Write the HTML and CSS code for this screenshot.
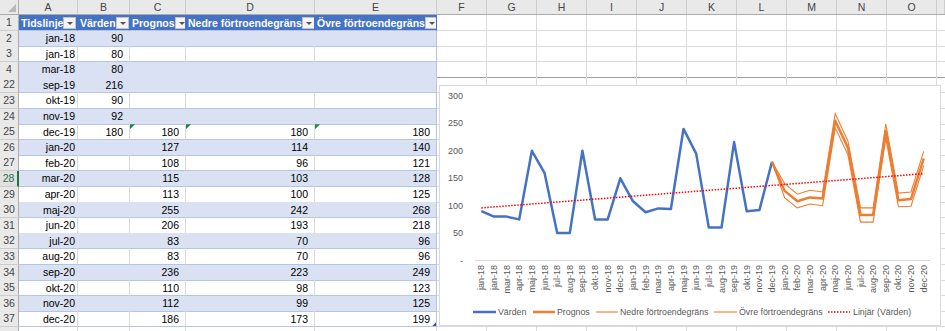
FILE: index.html
```html
<!DOCTYPE html>
<html lang="sv">
<head>
    <meta charset="UTF-8">
    <title>Prognos</title>
    <link rel="stylesheet" href="styles.css">
</head>
<body>
<div class="sheet">
    <div class="colhead">
        <div class="corner"></div>
        <div class="ch">A</div><div class="ch">B</div><div class="ch">C</div><div class="ch">D</div><div class="ch">E</div>
        <div class="ch">F</div><div class="ch">G</div><div class="ch">H</div><div class="ch">I</div><div class="ch">J</div>
        <div class="ch">K</div><div class="ch">L</div><div class="ch">M</div><div class="ch">N</div><div class="ch">O</div>
        <div class="ch"></div>
    </div>

    <div class="row hdr">
        <div class="rn">1</div>
        <div class="c">Tidslinje<span class="filter"></span></div>
        <div class="c">Värden<span class="filter"></span></div>
        <div class="c">Prognos<span class="filter"></span></div>
        <div class="c">Nedre förtroendegräns<span class="filter"></span></div>
        <div class="c e">Övre förtroendegräns<span class="filter"></span></div>
        <div class="rest"></div>
    </div>
    <div class="row band">
        <div class="rn">2</div><div class="c a">jan-18</div><div class="c">90</div><div class="c"></div><div class="c"></div><div class="c e"></div><div class="rest"></div>
    </div>
    <div class="row">
        <div class="rn">3</div><div class="c a">jan-18</div><div class="c">80</div><div class="c"></div><div class="c"></div><div class="c e"></div><div class="rest"></div>
    </div>
    <div class="row band before-hidden">
        <div class="rn">4</div><div class="c a">mar-18</div><div class="c">80</div><div class="c"></div><div class="c"></div><div class="c e"></div><div class="rest"></div>
    </div>
    <div class="row band">
        <div class="rn">22</div><div class="c a">sep-19</div><div class="c">216</div><div class="c"></div><div class="c"></div><div class="c e"></div><div class="rest"></div>
    </div>
    <div class="row">
        <div class="rn">23</div><div class="c a">okt-19</div><div class="c">90</div><div class="c"></div><div class="c"></div><div class="c e"></div><div class="rest"></div>
    </div>
    <div class="row band">
        <div class="rn">24</div><div class="c a">nov-19</div><div class="c">92</div><div class="c"></div><div class="c"></div><div class="c e"></div><div class="rest"></div>
    </div>
    <div class="row">
        <div class="rn">25</div><div class="c a">dec-19</div><div class="c">180</div><div class="c err">180</div><div class="c err">180</div><div class="c e err">180</div><div class="rest"></div>
    </div>
    <div class="row band">
        <div class="rn">26</div><div class="c a">jan-20</div><div class="c"></div><div class="c">127</div><div class="c">114</div><div class="c e">140</div><div class="rest"></div>
    </div>
    <div class="row">
        <div class="rn">27</div><div class="c a">feb-20</div><div class="c"></div><div class="c">108</div><div class="c">96</div><div class="c e">121</div><div class="rest"></div>
    </div>
    <div class="row band">
        <div class="rn sel">28</div><div class="c a">mar-20</div><div class="c"></div><div class="c">115</div><div class="c">103</div><div class="c e">128</div><div class="rest"></div>
    </div>
    <div class="row">
        <div class="rn">29</div><div class="c a">apr-20</div><div class="c"></div><div class="c">113</div><div class="c">100</div><div class="c e">125</div><div class="rest"></div>
    </div>
    <div class="row band">
        <div class="rn">30</div><div class="c a">maj-20</div><div class="c"></div><div class="c">255</div><div class="c">242</div><div class="c e">268</div><div class="rest"></div>
    </div>
    <div class="row">
        <div class="rn">31</div><div class="c a">jun-20</div><div class="c"></div><div class="c">206</div><div class="c">193</div><div class="c e">218</div><div class="rest"></div>
    </div>
    <div class="row band">
        <div class="rn">32</div><div class="c a">jul-20</div><div class="c"></div><div class="c">83</div><div class="c">70</div><div class="c e">96</div><div class="rest"></div>
    </div>
    <div class="row">
        <div class="rn">33</div><div class="c a">aug-20</div><div class="c"></div><div class="c">83</div><div class="c">70</div><div class="c e">96</div><div class="rest"></div>
    </div>
    <div class="row band">
        <div class="rn">34</div><div class="c a">sep-20</div><div class="c"></div><div class="c">236</div><div class="c">223</div><div class="c e">249</div><div class="rest"></div>
    </div>
    <div class="row">
        <div class="rn">35</div><div class="c a">okt-20</div><div class="c"></div><div class="c">110</div><div class="c">98</div><div class="c e">123</div><div class="rest"></div>
    </div>
    <div class="row band">
        <div class="rn">36</div><div class="c a">nov-20</div><div class="c"></div><div class="c">112</div><div class="c">99</div><div class="c e">125</div><div class="rest"></div>
    </div>
    <div class="row">
        <div class="rn">37</div><div class="c a">dec-20</div><div class="c"></div><div class="c">186</div><div class="c">173</div><div class="c e last">199</div><div class="rest"></div>
    </div>
    <div class="row plain">
        <div class="rn"></div><div class="c"></div><div class="c"></div><div class="c"></div><div class="c"></div><div class="c"></div><div class="rest"></div>
    </div>

    <div class="chart">
        <svg id="chartSvg" width="500" height="239" viewBox="1 1 500 239">
            <g class="axis-label y-labels">
                <text x="24" y="11">300</text>
                <text x="24" y="38.4">250</text>
                <text x="24" y="65.8">200</text>
                <text x="24" y="93.3">150</text>
                <text x="24" y="120.7">100</text>
                <text x="24" y="148.1">50</text>
                <text x="24" y="175.5">-</text>
            </g>
            <line class="axis" x1="36" y1="175.5" x2="491" y2="175.5"></line>
            <g id="xLabels" class="axis-label"></g>
            <g id="series"></g>

            <g class="legend">
                <line class="s-varden" x1="34" y1="227" x2="57" y2="227"></line>
                <text x="59" y="227">Värden</text>
                <line class="s-prognos" x1="94" y1="227" x2="116" y2="227"></line>
                <text x="118" y="227">Prognos</text>
                <line class="s-band" x1="157" y1="227" x2="179" y2="227"></line>
                <text x="181" y="227">Nedre förtroendegräns</text>
                <line class="s-band" x1="275" y1="227" x2="298" y2="227"></line>
                <text x="300" y="227">Övre förtroendegräns</text>
                <line class="s-trend" x1="389" y1="227" x2="411" y2="227"></line>
                <text x="414" y="227">Linjär (Värden)</text>
            </g>
        </svg>
    </div>
</div>

<script>
    const NS = 'http://www.w3.org/2000/svg';
    const months = ['jan-18','jan-18','mar-18','apr-18','maj-18','jun-18','jul-18','aug-18','sep-18','okt-18','nov-18','dec-18',
                    'jan-19','feb-19','mar-19','apr-19','maj-19','jun-19','jul-19','aug-19','sep-19','okt-19','nov-19','dec-19',
                    'jan-20','feb-20','mar-20','apr-20','maj-20','jun-20','jul-20','aug-20','sep-20','okt-20','nov-20','dec-20'];
    const varden = [90,80,80,75,200,160,50,50,200,75,75,150,108,88,95,94,240,195,60,60,216,90,92,180];
    // forecast starts at dec-19 (index 23)
    const prognos = [180,127,108,115,113,255,206,83,83,236,110,112,186];
    const nedre = [180,114,96,103,100,242,193,70,70,223,98,99,173];
    const ovre = [180,140,121,128,125,268,218,96,96,249,123,125,199];

    const px = i => 36 + 12.639 * (i + 0.5);
    const py = v => 175.5 - v * 0.5483;

    const labels = document.getElementById('xLabels');
    months.forEach((m, i) => {
        const t = document.createElementNS(NS, 'text');
        t.setAttribute('transform', 'translate(' + px(i).toFixed(1) + ',180) rotate(-90)');
        t.setAttribute('text-anchor', 'end');
        t.textContent = m;
        labels.appendChild(t);
    });

    const series = document.getElementById('series');
    function addLine(data, start, cls) {
        const p = document.createElementNS(NS, 'polyline');
        p.setAttribute('points', data.map((v, k) => px(start + k).toFixed(1) + ',' + py(v).toFixed(1)).join(' '));
        p.setAttribute('class', cls);
        series.appendChild(p);
    }
    addLine(varden, 0, 's-varden');
    addLine(prognos, 23, 's-prognos');
    addLine(nedre, 23, 's-band');
    addLine(ovre, 23, 's-band');
    addLine([96, 158.3], 0, 's-trend');
    // trend line runs over all 36 months
    series.lastChild.setAttribute('points', px(0).toFixed(1) + ',' + py(96).toFixed(1) + ' ' + px(35).toFixed(1) + ',' + py(158.3).toFixed(1));
</script>
</body>
</html>
```

FILE: styles.css
```css
body {
    margin: 0;
    background-color: #fff;
    font-family: "Liberation Sans", Arial, sans-serif;
    font-size: 10.5px;
    color: #000;
    overflow: hidden;
}

.sheet {
    position: relative;
    width: 945px;
    height: 331px;
    overflow: hidden;
}

/* column letters */
.colhead {
    display: grid;
    grid-template-columns: 19px 59px 52px 56px 129px 122px repeat(10, 50px) 1fr;
    height: 15px;
    box-sizing: border-box;
    background-color: #e9e9e9;
    border-bottom: 1px solid #ababab;
}

.ch {
    border-right: 1px solid #cdcdcd;
    text-align: center;
    line-height: 14px;
    color: #444;
}

.corner {
    position: relative;
    border-right: 1px solid #ababab;
}

.corner::after {
    content: "";
    position: absolute;
    right: 2px;
    bottom: 2px;
    width: 8px;
    height: 8px;
    background-color: #b9b9b9;
    clip-path: polygon(100% 0, 100% 100%, 0 100%);
}

/* rows */
.row {
    display: grid;
    grid-template-columns: 19px 59px 52px 56px 129px 122px 1fr;
    height: 15.6px;
}

.rn {
    background-color: #e9e9e9;
    border-right: 1px solid #ababab;
    border-bottom: 1px solid #cdcdcd;
    box-sizing: border-box;
    text-align: center;
    line-height: 15px;
    color: #444;
}

.rn.sel {
    color: #217346;
    background-color: #e1e1e1;
    border-right: 2px solid #217346;
}

.c {
    position: relative;
    display: flex;
    align-items: center;
    justify-content: flex-end;
    padding-right: 6px;
    box-sizing: border-box;
    border-right: 1px solid #dadada;
    border-bottom: 1px solid #b4c6e7;
    white-space: nowrap;
    overflow: hidden;
}

.c.a {
    padding-right: 2px;
}

.c.e {
    border-right-color: #b4c6e7;
}

.band .c {
    background-color: #d9e1f2;
    border-right-color: #d9e1f2;
}

.band .c.e {
    border-right-color: #b4c6e7;
}

.plain .c {
    border-bottom-color: #dadada;
}

.rest {
    box-sizing: border-box;
    border-bottom: 1px solid #dadada;
    background: repeating-linear-gradient(to right, transparent 0 49px, #dadada 49px 50px);
}

.before-hidden .rest,
.before-hidden .rn {
    border-bottom-color: #9e9e9e;
}

/* table header */
.hdr .c {
    justify-content: space-between;
    padding: 0 1px 0 2px;
    background-color: #4472c4;
    border-right-color: #4472c4;
    color: #fff;
    font-weight: bold;
}

.filter {
    position: relative;
    flex: none;
    width: 13px;
    height: 12px;
    box-sizing: border-box;
    background-color: #f4f4f4;
    border: 1px solid #c2c2c2;
}

.filter::after {
    content: "";
    position: absolute;
    left: 3px;
    top: 4px;
    border-left: 3px solid transparent;
    border-right: 3px solid transparent;
    border-top: 3px solid #555;
}

.c.err::before {
    content: "";
    position: absolute;
    left: 0;
    top: 0;
    width: 5px;
    height: 5px;
    background-color: #1e8a3e;
    clip-path: polygon(0 0, 100% 0, 0 100%);
}

.c.last::after {
    content: "";
    position: absolute;
    right: 0;
    bottom: 0;
    width: 4px;
    height: 4px;
    background-color: #2f5597;
    clip-path: polygon(100% 0, 100% 100%, 0 100%);
}

/* chart */
.chart {
    position: absolute;
    left: 439px;
    top: 85px;
    width: 502px;
    height: 241px;
    box-sizing: border-box;
    background-color: #fff;
    border: 1px solid #d9d9d9;
}

.chart svg {
    display: block;
}

.chart text {
    font-family: "Liberation Sans", Arial, sans-serif;
    fill: #595959;
    dominant-baseline: central;
}

.axis-label {
    font-size: 9px;
}

.y-labels {
    text-anchor: end;
}

.legend text {
    font-size: 8.8px;
}

.axis {
    stroke: #d9d9d9;
    stroke-width: 1;
}

.s-varden {
    fill: none;
    stroke: #4472c4;
    stroke-width: 2.5;
    stroke-linejoin: round;
}

.s-prognos {
    fill: none;
    stroke: #ed7d31;
    stroke-width: 2.5;
    stroke-linejoin: round;
}

.s-band {
    fill: none;
    stroke: #ed7d31;
    stroke-width: 1.1;
}

.s-trend {
    fill: none;
    stroke: #ff0000;
    stroke-width: 1.5;
    stroke-dasharray: 1.5 1.5;
}
```
